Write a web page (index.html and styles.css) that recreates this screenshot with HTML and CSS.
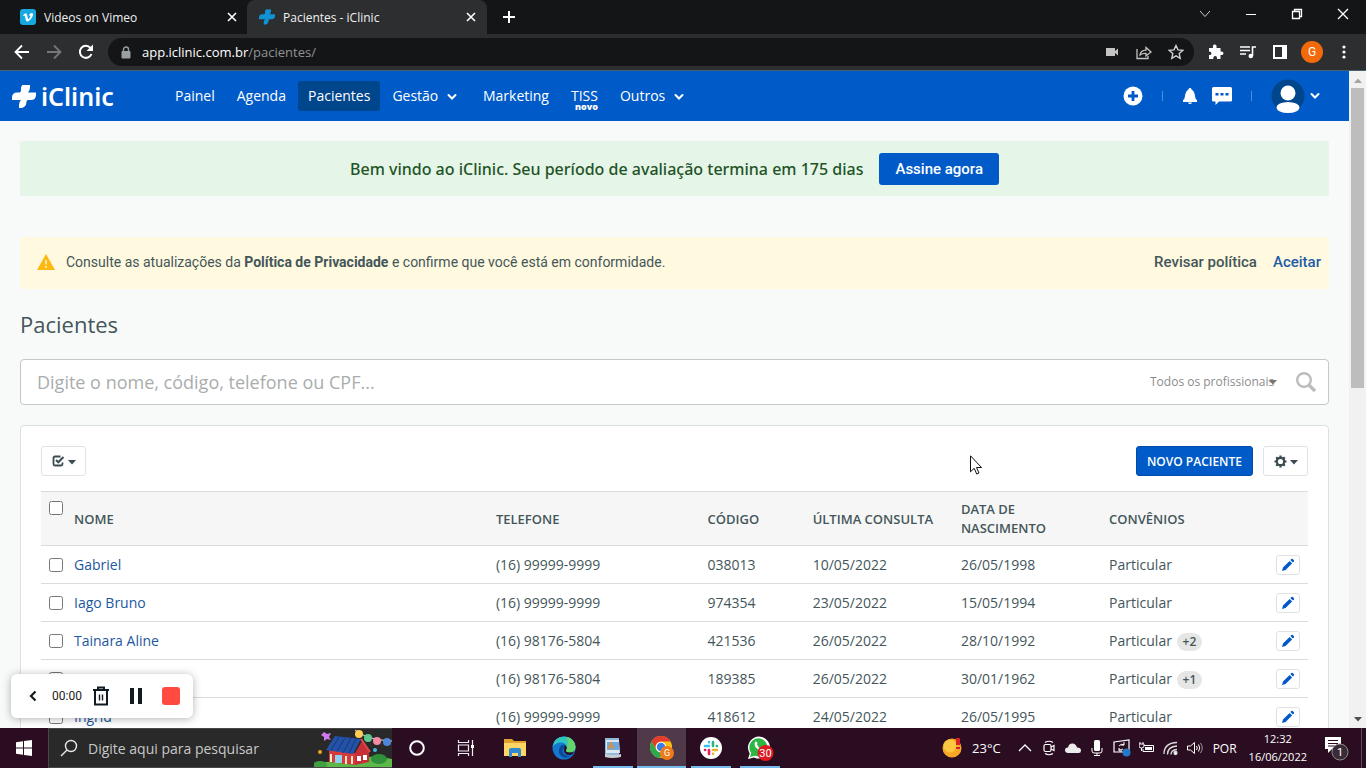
FILE: index.html
```html
<!DOCTYPE html>
<html lang="pt-BR">
<head>
<meta charset="utf-8">
<title>Pacientes - iClinic</title>
<link rel="stylesheet" href="styles.css">
</head>
<body>
<svg class="defs" aria-hidden="true">
  <symbol id="pencil" viewBox="0 0 14 14"><path fill="#0057c8" d="M1 13l1-3.400 6.600-6.700 2.500 2.500L4.500 12zM9.400 2.100l1-1q.7-.6 1.400 0l1.100 1.100q.6.700 0 1.400l-1 1z"/></symbol>
  <symbol id="close" viewBox="0 0 10 10"><path d="M1 1l8 8M9 1l-8 8" stroke="#fff" stroke-width="1.600"/></symbol>
  <symbol id="chev" viewBox="0 0 10 8"><path d="M1.500 2L5 5.500 8.500 2" fill="none" stroke="currentColor" stroke-width="2" stroke-linecap="round"/></symbol>
  <symbol id="cross" viewBox="0 0 24 23"><path d="M10.500 0H18v2q0 4-2 5.500h8v3q-.5 4.500-5 4.500h-3q-1.200.2-1.500 1.500 0 5-4.500 6.500H7v-3q.2-3.500 2-5H0v-3q.5-4.500 5-4.500h2.500Q9 7 9 5.500 8.500 1.500 10.500 0z"/></symbol>
  <symbol id="caret" viewBox="0 0 8 5"><path d="M0 0h8L4 4.500z" fill="currentColor"/></symbol>
</svg>

<div class="tabs">
  <div class="tab">
    <svg class="fav" viewBox="0 0 16 16"><rect width="16" height="16" rx="3" fill="#17a8e0"/><path d="M3 6.200l2-1.700q1.600-.8 2.100 1.400l.8 3.600q.5 1.200 1.300 0 1.500-2.300 1.100-2.800-.4-.5-1.400-.1Q9.600 3.800 11.900 4q1.700.3 1 2.700-1.300 3.300-4.500 5.600-1.700.8-2.400-.8L4.900 7.300q-.3-.9-1.200-.3z" fill="#fff"/></svg>
    <span class="tab-title">Videos on Vimeo</span>
    <button class="tab-close" aria-label="Fechar guia"><svg width="10" height="10"><use href="#close"/></svg></button>
  </div>
  <div class="tab tab-active">
    <svg class="fav" viewBox="0 0 24 23" fill="#1192d2"><use href="#cross"/></svg>
    <span class="tab-title">Pacientes - iClinic</span>
    <button class="tab-close" aria-label="Fechar guia"><svg width="10" height="10"><use href="#close"/></svg></button>
  </div>
  <button class="new-tab" aria-label="Nova guia"><svg width="12" height="12" viewBox="0 0 12 12"><path d="M6 0v12M0 6h12" stroke="#fff" stroke-width="2"/></svg></button>
  <div class="win">
    <button aria-label="Guias"><svg width="12" height="12" viewBox="0 0 12 12"><path d="M1 3l5 5.500L11 3" fill="none" stroke="#ccc"/></svg></button>
    <button aria-label="Minimizar"><svg width="12" height="12" viewBox="0 0 12 12"><path d="M1 6.500h10" stroke="#fff"/></svg></button>
    <button aria-label="Restaurar"><svg width="12" height="12" viewBox="0 0 12 12"><path d="M1.500 3.500h7v7h-7zM3.500 3.500v-2h7v7h-2" fill="none" stroke="#fff" stroke-width="1.300"/></svg></button>
    <button aria-label="Fechar"><svg width="12" height="12" viewBox="0 0 12 12"><path d="M1 1l10 10M11 1L1 11" stroke="#fff" stroke-width="1.300"/></svg></button>
  </div>
</div>

<div class="toolbar">
  <div class="history">
    <button aria-label="Voltar"><svg width="16" height="16" viewBox="0 0 16 16"><path d="M15 8H2M8 1.500L1.500 8 8 14.500" fill="none" stroke="#fff" stroke-width="1.800"/></svg></button>
    <button aria-label="Avançar"><svg width="16" height="16" viewBox="0 0 16 16"><path d="M1 8h13M8 1.500L14.500 8 8 14.500" fill="none" stroke="#777" stroke-width="1.800"/></svg></button>
    <button aria-label="Recarregar"><svg width="16" height="16" viewBox="0 0 16 16"><path d="M13.500 10A6 6 0 1 1 12.500 4" fill="none" stroke="#fff" stroke-width="2"/><path d="M15 .5V7H8.500z" fill="#fff"/></svg></button>
  </div>
  <div class="address">
    <svg width="10" height="13" viewBox="0 0 10 13"><path d="M2.500 6V3.500a2.500 2.500 0 0 1 5 0V6" fill="none" stroke="#9aa0a0" stroke-width="1.400"/><rect x=".5" y="5" width="9" height="7.500" rx="1" fill="#9aa0a0"/></svg>
    <span class="url"><b>app.iclinic.com.br</b>/pacientes/</span>
    <div class="address-icons">
      <svg width="16" height="16" viewBox="0 0 16 16"><path d="M2 4h9v3l3-2.500v7L11 9v3H2z" fill="#c4c4c4"/></svg>
      <svg width="16" height="16" viewBox="0 0 16 16" fill="none" stroke="#c4c4c4" stroke-width="1.300"><path d="M1 5v9.500h11V12M4 11q.5-4.500 6-4.800V3.500L15 8l-5 4V9.500q-3.500-.3-6 1.500z"/></svg>
      <svg width="16" height="16" viewBox="0 0 16 16"><path d="M8 1.500l2 4.400 4.700.5-3.500 3.200 1 4.700L8 11.900l-4.200 2.400 1-4.700L1.300 6.400 6 5.900z" fill="none" stroke="#d0d0d0" stroke-width="1.400"/></svg>
    </div>
  </div>
  <div class="extensions">
    <svg width="16" height="16" viewBox="0 0 16 16"><path d="M1 4h4q-.7-3.500 1.700-3.500T8.500 4h4v3.500Q15.500 7 15.500 9.200T12.500 11v4H9q.3-3-1.800-3T5.300 15H1v-4q2.500.2 2.500-1.600T1 7.500z" fill="#fff"/></svg>
    <svg width="16" height="16" viewBox="0 0 16 16"><path d="M0 3h10M0 6.500h10M0 10h6M12.500 12V3H16" stroke="#fff" stroke-width="1.600" fill="none"/><circle cx="10.800" cy="12" r="2.300" fill="#fff"/></svg>
    <svg width="16" height="16" viewBox="0 0 16 16"><path d="M2 2h12v12H2z" stroke="#fff" stroke-width="2" fill="none"/><path d="M10 2h4v12h-4z" fill="#fff"/></svg>
    <span class="profile">G</span>
    <svg width="16" height="16" viewBox="0 0 16 16" fill="#fff"><circle cx="8" cy="3" r="1.600"/><circle cx="8" cy="8" r="1.600"/><circle cx="8" cy="13" r="1.600"/></svg>
  </div>
</div>

<div class="viewport">
  <div class="page">
    <header class="nav">
      <a class="logo" href="#"><svg width="24" height="23" fill="#fff"><use href="#cross"/></svg><span>iClinic</span></a>
      <nav class="menu">
        <a href="#">Painel</a>
        <a href="#">Agenda</a>
        <a href="#" class="current">Pacientes</a>
        <a href="#" class="drop">Gestão <svg width="10" height="8"><use href="#chev"/></svg></a>
        <a href="#">Marketing</a>
        <a href="#" class="tiss">TISS<small>novo</small></a>
        <a href="#" class="drop">Outros <svg width="10" height="8"><use href="#chev"/></svg></a>
      </nav>
      <div class="nav-actions">
        <button aria-label="Adicionar"><svg width="20" height="20" viewBox="0 0 20 20"><circle cx="10" cy="10" r="9.500" fill="#fff"/><path d="M10 5v10M5 10h10" stroke="#0057c8" stroke-width="2.800"/></svg></button>
        <i class="sep"></i>
        <button aria-label="Notificações"><svg width="16" height="18" viewBox="0 0 16 18"><path d="M8 1q1.300 0 1.500 1.400Q12.500 4 13 9q.3 3.500 2 4v2H1v-2q1.700-.5 2-4 .5-5 3.500-6.600Q6.700 1 8 1zM6 15.500h4Q9.500 17 8 17t-2-1.500z" fill="#fff"/></svg></button>
        <button aria-label="Mensagens"><svg width="20" height="18" viewBox="0 0 20 18"><path d="M1.500 0h17Q20 0 20 1.500v12q0 1-1.500 1H7L3.500 18v-3.500h-2Q0 14.500 0 13.500v-12Q0 0 1.500 0z" fill="#fff"/><path d="M3.500 6h3v2.500h-3zM8.500 6h3v2.500h-3zM13.500 6h3v2.500h-3z" fill="#0057c8"/></svg></button>
        <i class="sep"></i>
        <button class="user" aria-label="Conta"><svg width="34" height="34" viewBox="0 0 34 34"><circle cx="17" cy="17" r="16.500" fill="#00468c"/><circle cx="17" cy="14" r="7.500" fill="#fff"/><ellipse cx="17" cy="28.500" rx="11.500" ry="5.500" fill="#fff"/></svg><svg width="10" height="8"><use href="#chev"/></svg></button>
      </div>
    </header>

    <main class="content">
      <section class="trial">
        <p>Bem vindo ao iClinic. Seu período de avaliação termina em 175 dias</p>
        <button>Assine agora</button>
      </section>
      <section class="policy">
        <svg width="18" height="16" viewBox="0 0 18 16"><path d="M9 0l9 16H0z" fill="#fdb913"/><path d="M9 6v4.500M9 12v1.700" stroke="#fff3c4" stroke-width="1.600"/></svg>
        <p>Consulte as atualizações da <b>Política de Privacidade</b> e confirme que você está em conformidade.</p>
        <a href="#">Revisar política</a>
        <a href="#" class="accept">Aceitar</a>
      </section>
      <h1>Pacientes</h1>
      <form class="search">
        <input type="text" aria-label="Buscar paciente" placeholder="Digite o nome, código, telefone ou CPF...">
        <div class="prof">
          <select aria-label="Profissional"><option>Todos os profissionais</option></select>
          <svg class="prof-caret" width="8" height="5"><use href="#caret"/></svg>
        </div>
        <button type="button" aria-label="Buscar"><svg width="22" height="22" viewBox="0 0 22 22" fill="none" stroke="#bdbdbd"><circle cx="9" cy="9" r="6.800" stroke-width="2.400"/><path d="M14 14l6 6" stroke-width="3.400"/></svg></button>
      </form>

      <section class="card">
        <div class="actions">
          <button class="tool" aria-label="Seleção"><svg width="13" height="12" viewBox="0 0 13 12"><path d="M8.500 1.500H3q-1.500 0-1.500 1.500v6q0 1.500 1.500 1.500h6q1.500 0 1.500-1.500V7.500" fill="none" stroke="#3b4b50" stroke-width="1.800"/><path d="M4 5l2.300 2.300L11.500 2" fill="none" stroke="#3b4b50" stroke-width="2"/></svg><svg class="tool-caret" width="8" height="5"><use href="#caret"/></svg></button>
          <button class="new">NOVO PACIENTE</button>
          <button class="tool" aria-label="Configurações"><svg width="13" height="13" viewBox="-7 -7 14 14"><circle r="4" fill="none" stroke="#3b4b50" stroke-width="2.400"/><path d="M0-6.500v2M0 6.500v-2M-6.500 0h2M6.500 0h-2M-4.600-4.600l1.400 1.400M4.600 4.600L3.200 3.200M4.600-4.600L3.200-3.200M-4.600 4.600l1.400-1.400" stroke="#3b4b50" stroke-width="2.400"/></svg><svg class="tool-caret" width="8" height="5"><use href="#caret"/></svg></button>
        </div>
        <table>
          <colgroup><col class="c-check"><col class="c-name"><col class="c-phone"><col class="c-code"><col class="c-date"><col class="c-date"><col><col class="c-edit"></colgroup>
          <thead>
            <tr><th class="pick"><input type="checkbox" aria-label="Selecionar todos"></th><th>NOME</th><th>TELEFONE</th><th>CÓDIGO</th><th>ÚLTIMA CONSULTA</th><th>DATA DE NASCIMENTO</th><th>CONVÊNIOS</th><th></th></tr>
          </thead>
          <tbody>
            <tr><td><input type="checkbox" aria-label="Gabriel"></td><td><a href="#">Gabriel</a></td><td>(16) 99999-9999</td><td>038013</td><td>10/05/2022</td><td>26/05/1998</td><td>Particular</td><td><button class="edit" aria-label="Editar"><svg width="14" height="14"><use href="#pencil"/></svg></button></td></tr>
            <tr><td><input type="checkbox" aria-label="Iago Bruno"></td><td><a href="#">Iago Bruno</a></td><td>(16) 99999-9999</td><td>974354</td><td>23/05/2022</td><td>15/05/1994</td><td>Particular</td><td><button class="edit" aria-label="Editar"><svg width="14" height="14"><use href="#pencil"/></svg></button></td></tr>
            <tr><td><input type="checkbox" aria-label="Tainara Aline"></td><td><a href="#">Tainara Aline</a></td><td>(16) 98176-5804</td><td>421536</td><td>26/05/2022</td><td>28/10/1992</td><td>Particular <span class="more">+2</span></td><td><button class="edit" aria-label="Editar"><svg width="14" height="14"><use href="#pencil"/></svg></button></td></tr>
            <tr><td><input type="checkbox" aria-label="Paciente"></td><td></td><td>(16) 98176-5804</td><td>189385</td><td>26/05/2022</td><td>30/01/1962</td><td>Particular <span class="more">+1</span></td><td><button class="edit" aria-label="Editar"><svg width="14" height="14"><use href="#pencil"/></svg></button></td></tr>
            <tr><td><input type="checkbox" aria-label="Ingrid"></td><td><a href="#">Ingrid</a></td><td>(16) 99999-9999</td><td>418612</td><td>24/05/2022</td><td>26/05/1995</td><td>Particular</td><td><button class="edit" aria-label="Editar"><svg width="14" height="14"><use href="#pencil"/></svg></button></td></tr>
          </tbody>
        </table>
      </section>
    </main>
  </div>
  <div class="scroll">
    <svg width="8" height="5" viewBox="0 0 8 5"><path d="M0 5h8L4 .5z" fill="#a3a3a3"/></svg>
    <div class="track"><div class="thumb"></div></div>
    <svg width="8" height="5" viewBox="0 0 8 5"><path d="M0 0h8L4 4.500z" fill="#505050"/></svg>
  </div>

  <div class="recorder">
    <button aria-label="Recolher"><svg width="8" height="12" viewBox="0 0 8 12"><path d="M6.500 1.500L2 6l4.500 4.500" fill="none" stroke="#111c22" stroke-width="2.200"/></svg></button>
    <span class="time">00:00</span>
    <button aria-label="Descartar"><svg width="18" height="20" viewBox="0 0 18 20" fill="none" stroke="#111c22"><path d="M1 4h16M6 4V1.500h6V4M3 4v14.500h12V4" stroke-width="2"/><path d="M7.500 8.500v6M10.500 8.500v6" stroke-width="1.400"/></svg></button>
    <button aria-label="Pausar"><svg width="12" height="16" viewBox="0 0 12 16"><path d="M0 0h4v16H0zM8 0h4v16H8z" fill="#111c22"/></svg></button>
    <button class="stop" aria-label="Parar"></button>
  </div>
  <svg class="cursor" width="12" height="20" viewBox="0 0 12 20"><path d="M.5.800v16l3.700-3.500 2.500 5.700 2.300-1-2.500-5.500h5z" fill="#fff" stroke="#111"/></svg>
</div>

<footer class="taskbar">
  <button class="start" aria-label="Iniciar"><svg width="16" height="16" viewBox="0 0 16 16"><path d="M0 2.300L7 1.300v6.300H0zM8 1.100L16 0v7.600H8zM0 8.500h7v6.300l-7-1zM8 8.500h8V16l-8-1.100z" fill="#fff"/></svg></button>
  <label class="tb-search">
    <svg width="18" height="18" viewBox="0 0 18 18" fill="none" stroke="#e8e8e8" stroke-width="1.400"><circle cx="11" cy="7" r="5.500"/><path d="M7 11l-6 6"/></svg>
    <input type="text" placeholder="Digite aqui para pesquisar">
    <svg class="party" width="78" height="38" viewBox="0 0 78 38">
      <path d="M0 38q8-6 18-5 12-5 26-3 15-5 34 0v8z" fill="#5cb947"/>
      <ellipse cx="65" cy="30" rx="8" ry="5" fill="#2f8f3b"/><ellipse cx="6" cy="36" rx="7" ry="4" fill="#3fa03f"/>
      <path d="M15 21l26 3v12l-26-3z" fill="#d63a3a"/><path d="M41 24l7-12 7 10v11l-14 3z" fill="#c62f35"/>
      <path d="M21 7l26 3-8 15-27-4z" fill="#2452a8"/><path d="M25 8l-8 13M31 9l-8 13M37 9l-8 15M42 10l-7 14" stroke="#163878"/>
      <path d="M47 10l9 13" stroke="#e04848" stroke-width="2"/>
      <path d="M21 26h7v8h-7z" fill="#8ed1ef"/><path d="M17 25v8M32 27v8M38 27v8" stroke="#f7e8c8" stroke-width="2"/>
      <path d="M43 27h4v5h-4zM49 26h4v5h-4z" fill="#fff"/>
      <path d="M41 1q12 10 37 11" stroke="#ddd" fill="none"/>
      <circle cx="45" cy="5" r="4" fill="#ffcf55"/><circle cx="54" cy="9" r="4" fill="#5bc98d"/><circle cx="63" cy="12" r="4" fill="#f38ba3"/><circle cx="73" cy="13" r="4" fill="#4f87d8"/>
      <path d="M10 3l3 2 4-1-2 4 2 3-4-1-3 2v-4l-3-2z" fill="#ce79ec"/><circle cx="6" cy="23" r="2" fill="#f5a623"/><circle cx="61" cy="21" r="2" fill="#45b8e8"/>
    </svg>
  </label>
  <div class="apps">
    <button aria-label="Cortana"><svg width="16" height="16" viewBox="0 0 16 16"><circle cx="8" cy="8" r="6.800" fill="none" stroke="#fff" stroke-width="2"/></svg></button>
    <button aria-label="Visão de tarefas"><svg width="18" height="16" viewBox="0 0 18 16" fill="none" stroke="#eee" stroke-width="1.200"><path d="M1.500 0v2.500h10V0M1.500 16v-2.500h10V16M1.500 5h10v6h-10zM15.500 0v16"/><path d="M14 5h3v3h-3z" fill="#fff" stroke="none"/></svg></button>
    <button aria-label="Explorador"><svg width="22" height="20" viewBox="0 0 22 20"><path d="M0 1h8l2 2h12v5H0z" fill="#e0a22c"/><path d="M0 5h22v13H0z" fill="#ffd565"/><path d="M5 12q0-2 2-2h8q2 0 2 2v7h-3v-4H8v4H5z" fill="#2e8bd0"/></svg></button>
    <button aria-label="Edge"><svg width="24" height="24" viewBox="0 0 24 24"><circle cx="12" cy="12" r="11.500" fill="#1478d0"/><path d="M.5 11Q2 .5 12 .5 23 1 23.500 11q0 5.500-6 5.500-4 0-3.500-2.500 2-2 .5-4.500Q12 6 7.500 6.500 2.500 7.500.5 11z" fill="#2fc4c0"/><path d="M14 .700q9 2 9.500 10.300 0 5.500-6 5.500-4 0-3.500-2.500 2-2 .5-4.500 3-3-.5-8.800z" fill="#63d36a"/><path d="M13.500 9Q10 8 8 11q-3 5 1 9 5 4 12-1.500-5 3-9-.5-3-3 0-6 1.500-1.500 1.500-3z" fill="#0b4a9a"/><path d="M13.500 9.500q2 2 .5 4.500-.5 2.500 3.500 2.500 3 0 4.500-1.300-1 3-3.500 3.800-4 .5-6-2.500-1.500-4 1-7z" fill="#2b0d22"/></svg></button>
    <button class="open" aria-label="Bloco"><svg width="18" height="22" viewBox="0 0 18 22"><path d="M1 1h14v17H1z" fill="#8fb9d8"/><path d="M2 3h13l1 13H2z" fill="#dce8f2"/><path d="M3 5h12v8H3z" fill="#6ca9dc"/><path d="M4 12l3-6 3 6M5 10h4" stroke="#e58a36" stroke-width="1.500" fill="none"/><path d="M1 17q9 2 16 0v3q-9 2-16 0z" fill="#c8cdd2"/></svg></button>
    <button class="open focused" aria-label="Chrome"><svg width="24" height="24" viewBox="0 0 24 24"><circle cx="11" cy="11" r="11" fill="#fbc116"/><path d="M11 0A11 11 0 0 1 20.500 5.500H11A5.500 5.500 0 0 0 6.200 13.700L1.500 5.500A11 11 0 0 1 11 0z" fill="#e33b2e"/><path d="M1.500 5.500l4.700 8.200Q8 17 12.500 16.300L10 22A11 11 0 0 1 1.500 5.500z" fill="#2da94f"/><circle cx="11" cy="11" r="5.200" fill="#fff"/><circle cx="11" cy="11" r="4.200" fill="#3b7de8"/><circle cx="17" cy="17" r="7" fill="#ef7a1a"/><text x="17" y="20" text-anchor="middle" fill="#fff" font-size="9">G</text></svg></button>
    <button class="open" aria-label="Slack"><svg width="22" height="22" viewBox="0 0 22 22"><circle cx="11" cy="11" r="11" fill="#fff"/><g fill="none" stroke-width="2.600" stroke-linecap="round"><path d="M9 5v.2M5 9h4" stroke="#36c5f0"/><path d="M13 5v4M17 9h-.2" stroke="#2eb67d"/><path d="M13 13h4M13 17v-.2" stroke="#ecb22e"/><path d="M9 13v4M5 13h.2" stroke="#e01e5a"/></g></svg></button>
    <button class="open" aria-label="WhatsApp"><svg width="28" height="26" viewBox="0 0 28 26"><path d="M2 24l1.700-5.500A11 11 0 1 1 8 22.400z" fill="#fff"/><path d="M4 22l1.200-4.200A9 9 0 1 1 9 20.700z" fill="#2bb741"/><path d="M9 7q1.500-1.500 2.500 1l-.5 1.500q1 3 4 4l1.500-1q3 1 1 2.500-2 1.500-6-1T9 7z" fill="#fff"/><circle cx="19.500" cy="18" r="8" fill="#de1b22"/><text x="19.500" y="22" text-anchor="middle" fill="#fff" font-size="11">30</text></svg></button>
  </div>
  <div class="tray">
    <svg class="sun" width="20" height="20" viewBox="0 0 20 20"><circle cx="10" cy="10" r="9.500" fill="#f9a825"/><circle cx="8" cy="8" r="6.500" fill="#fdc742"/><path d="M14 0h4v7h-4zM14 9h4v2h-4z" fill="#d8202a"/></svg>
    <span class="temp">23°C</span>
    <div class="tray-icons">
    <svg width="16" height="16" viewBox="0 0 16 16"><path d="M2 11l6-6 6 6" fill="none" stroke="#fff" stroke-width="1.300"/></svg>
    <svg width="16" height="16" viewBox="0 0 16 16" fill="none" stroke="#fff" stroke-width="1.200"><rect x="3" y="4.500" width="7" height="7" rx="1.500"/><path d="M10 7l3-1.500v5L10 9M4 2.500q4-2.500 8 0M4 13.500q4 2.500 8 0"/></svg>
    <svg width="16" height="16" viewBox="0 0 16 16"><path d="M3 13q-3-.4-3-3t3-2.500Q4 3 8 3.500q3 .5 4 4 4 0 4 3T13 13z" fill="#ececec"/></svg>
    <svg width="16" height="16" viewBox="0 0 16 16"><rect x="5" y="0" width="6" height="11" rx="1.500" fill="#fff"/><path d="M3 8v3q0 2 2 2h6q2 0 2-2V8M8 13v3M5 15.500h6" stroke="#fff" fill="none"/></svg>
    <svg width="18" height="18" viewBox="0 0 18 18"><path d="M1 3l15-2v12H1z" fill="none" stroke="#fff" stroke-width="1.200"/><path d="M6 7q2-3 5-1M11 3v3H8M6 9v3h3M6 10q2 2 4 0" stroke="#fff" fill="none"/><circle cx="13.500" cy="13.500" r="4" fill="#2478c8"/></svg>
    <svg width="16" height="16" viewBox="0 0 16 16" fill="none" stroke="#fff"><path d="M5 5.500h9.500v6H4V9M1 2v2M4 2v2M0 4h5v2q0 2-2.500 2T0 6zM2.500 8v3"/><path d="M6 7h7v3H6z" fill="#fff" stroke="none"/></svg>
    <svg width="16" height="16" viewBox="0 0 16 16" fill="none" stroke="#ddd" stroke-width="1.300"><path d="M1 14Q1 3 14 2.500M4.500 14.500Q4.500 6.500 14 6M8 14.500Q8 10 14 9.500"/><circle cx="12.500" cy="13" r="1.500" fill="#fff"/></svg>
    <svg width="16" height="16" viewBox="0 0 16 16" fill="none" stroke="#fff"><path d="M.5 6h3l4-3.500v11L3.500 10h-3zM9.500 6q1.500 2 0 4M11.500 4.500q2.500 3.500 0 7"/><path d="M13.500 3q3.500 5 0 10" stroke="#999"/></svg>
    </div>
    <span class="lang">POR</span>
    <div class="clock"><span>12:32</span><span>16/06/2022</span></div>
    <svg class="note" width="28" height="26" viewBox="0 0 28 26"><path d="M1 2h16v12H8l-4 4v-4H1z" fill="#fff"/><path d="M4 5.500h10M4 8.500h10M4 11h7" stroke="#2b0d22"/><circle cx="16" cy="17" r="8" fill="#3a2c36" stroke="#888"/><text x="16" y="21" text-anchor="middle" fill="#fff" font-size="11">1</text></svg>
    <i class="peek"></i>
  </div>
</footer>
</body>
</html>
```
FILE: styles.css
```css
* { box-sizing: border-box; }

body {
  margin: 0;
  height: 100vh;
  display: flex;
  flex-direction: column;
  overflow: hidden;
  font-family: "Open Sans", "Noto Sans", sans-serif;
  font-size: 14px;
  color: #44565a;
}

button {
  border: 0;
  padding: 0;
  background: none;
  font: inherit;
  color: inherit;
  display: flex;
  align-items: center;
  justify-content: center;
}

a { color: inherit; text-decoration: none; }
p, h1 { margin: 0; }
svg { flex: none; }
.defs { position: absolute; width: 0; height: 0; }

/* Browser window */
.tabs {
  flex: none;
  height: 34px;
  display: flex;
  align-items: stretch;
  background: #141517;
  color: #f0f0f0;
  font-size: 12px;
}
.tab {
  width: 240px;
  display: flex;
  align-items: center;
  padding: 0 11px 0 12px;
}
.tab:first-child { width: 247px; padding: 0 10px 0 20px; }
.tab-active { background: #2d2e30; border-radius: 8px 8px 0 0; }
.fav { width: 16px; height: 16px; margin-right: 8px; }
.tab-title { flex: 1; }
.tab-close { width: 10px; }
.new-tab { width: 44px; }
.win { margin-left: auto; display: flex; }
.win button { width: 46px; padding-bottom: 6px; }

.toolbar {
  flex: none;
  height: 37px;
  display: flex;
  align-items: center;
  padding: 0 14px;
  background: #2d2e30;
  border-bottom: 1px solid #47606f;
}
.history { display: flex; gap: 16px; margin-right: 14px; }
.address {
  flex: 1;
  height: 28px;
  display: flex;
  align-items: center;
  padding: 0 10px 0 13px;
  border-radius: 14px;
  background: #141517;
}
.url { flex: 1; padding-left: 11px; color: #909294; font-size: 13px; }
.url b { font-weight: 400; color: #fff; }
.address-icons { display: flex; gap: 16px; }
.extensions { display: flex; align-items: center; gap: 16px; padding-left: 14px; }
.profile {
  width: 22px;
  height: 22px;
  margin: 0 -3px;
  border-radius: 50%;
  background: #f26a0a;
  color: #fff;
  font: 12px/22px Roboto, sans-serif;
  text-align: center;
}

/* Application */
.viewport { flex: 1; min-height: 0; display: flex; position: relative; }
.page { flex: 1; min-width: 0; overflow: hidden; background: #f8faf9; }

.nav {
  height: 50px;
  display: flex;
  align-items: center;
  padding: 0 29px 0 12px;
  background: #005bc8;
  color: #fff;
}
.logo {
  display: flex;
  align-items: center;
  gap: 5px;
  width: 153px;
  font: 600 25px/30px "Noto Sans", sans-serif;
}
.menu { display: flex; gap: 2px; }
.menu a {
  position: relative;
  height: 30px;
  padding: 0 10px;
  line-height: 30px;
  white-space: nowrap;
}
.menu .current { background: #00468c; border-radius: 2px; }
.menu .drop { padding-right: 14px; }
.drop svg { margin-left: 5px; }
.menu small {
  position: absolute;
  right: 10px;
  top: 20px;
  font-size: 9px;
  line-height: 12px;
  font-weight: 800;
}
.nav-actions { display: flex; align-items: center; gap: 14px; margin-left: auto; }
.sep { width: 1px; height: 10px; margin: 0 5px; background: #4b8fdd; }
.user { gap: 5px; }

.content { padding: 20px 20px 0; }
.trial {
  min-height: 55px;
  display: flex;
  align-items: center;
  justify-content: center;
  gap: 16px;
  border-radius: 3px;
  background: #e5f5e7;
  color: #1f5428;
  font: 500 16px/24px "Noto Sans", sans-serif;
}
.trial button {
  height: 32px;
  padding: 0 16px;
  border-radius: 3px;
  background: #005bc8;
  color: #fff;
  font: 500 15px Roboto, sans-serif;
}
.policy {
  min-height: 52px;
  margin-top: 41px;
  display: flex;
  align-items: center;
  padding: 0 8px 2px 17px;
  border-radius: 3px;
  background: #fff9df;
  font: 14px Roboto, sans-serif;
}
.policy p { flex: 1; padding-left: 11px; }
.policy a { margin-left: 16px; font-weight: 500; font-size: 15px; }
.policy .accept { color: #1f5ca8; }

h1 { margin: 20px 0; font-size: 22px; line-height: 30px; font-weight: 400; }

.search {
  height: 46px;
  display: flex;
  align-items: center;
  padding: 0 11px 0 16px;
  border: 1px solid #c3c8c9;
  border-radius: 4px;
  background: #fff;
}
.search input {
  flex: 1;
  border: 0;
  padding: 0;
  background: none;
  font: 18px "Open Sans", sans-serif;
}
.search input::placeholder { color: #a9adae; }
.prof { position: relative; width: 127px; margin-right: 18px; padding-bottom: 2px; }
.prof select {
  display: block;
  appearance: none;
  width: 100%;
  border: 0;
  padding: 0;
  background: none;
  color: #8c8c8c;
  font: 12px "Open Sans", sans-serif;
}
.prof-caret { position: absolute; right: 0; top: 7px; color: #777; }

.card {
  margin-top: 20px;
  padding: 20px;
  border: 1px solid #dbe0e1;
  border-radius: 4px;
  background: #fff;
}
.actions { display: flex; gap: 10px; margin-bottom: 15px; }
.tool {
  width: 45px;
  height: 30px;
  gap: 3px;
  border: 1px solid #dfe3e4;
  border-radius: 3px;
  background: #fff;
  color: #3b4b50;
}
.tool-caret { margin-top: 3px; }
.new {
  height: 30px;
  margin-left: auto;
  padding: 0 10px;
  border: 1px solid #004ba8;
  border-radius: 3px;
  background: #005bc8;
  color: #fff;
  font-size: 12px;
  font-weight: 600;
}

table { width: 100%; table-layout: fixed; border-collapse: collapse; }
.c-check { width: 25px; }
.c-name { width: 33.3%; }
.c-phone { width: 16.7%; }
.c-code { width: 8.3%; }
.c-date { width: 11.7%; }
.c-edit { width: 40px; }
th {
  height: 54px;
  padding: 8px 8px 7px;
  border-top: 1px solid #d9dcdd;
  background: #f6f6f6;
  text-align: left;
  font-size: 13px;
  line-height: 19px;
  font-weight: 600;
}
th.pick { vertical-align: top; }
td {
  height: 38px;
  padding: 0 8px;
  border-top: 1px solid #d9dcdd;
  line-height: 20px;
}
td a { color: #1c57a0; }
td input, th input { display: block; width: 14px; height: 14px; margin: 0; }
th input { margin-top: 1px; }
.edit {
  width: 24px;
  height: 20px;
  border: 1px solid #dde2e4;
  border-radius: 3px;
  background: #fff;
}
.more {
  display: inline-block;
  margin-left: 1px;
  padding: 0 6px;
  border-radius: 9px;
  background: #e6e6e6;
  font-size: 12px;
  font-weight: 600;
  line-height: 18px;
}

.scroll {
  width: 17px;
  display: flex;
  flex-direction: column;
  align-items: center;
  padding: 7px 0 6px;
  gap: 5px;
  background: #f1f1f1;
}
.track { flex: 1; align-self: stretch; padding: 0 2px; }
.thumb { height: 48%; background: #bdbdbd; }

.recorder {
  position: absolute;
  left: 11px;
  bottom: 10px;
  width: 182px;
  height: 44px;
  display: flex;
  align-items: center;
  gap: 20px;
  padding: 0 13px 0 18px;
  border-radius: 6px;
  background: #fff;
  box-shadow: 0 1px 8px rgba(0, 0, 0, .3);
}
.time { margin: 0 -10px 0 -5px; font: 12px Roboto, sans-serif; color: #222; }
.stop { width: 18px; height: 18px; border-radius: 3px; background: #ff4a42; }
.cursor { position: absolute; left: 970px; top: 384px; }

/* Taskbar */
.taskbar {
  flex: none;
  height: 40px;
  display: flex;
  background: #2b0d22;
  color: #fff;
}
.start { width: 48px; }
.tb-search {
  width: 344px;
  display: flex;
  align-items: center;
  padding-left: 11px;
  border: 1px solid #4a4547;
  border-right: 0;
  background: #292929;
}
.tb-search input {
  flex: 1;
  min-width: 0;
  margin-left: 10px;
  padding: 0;
  border: 0;
  background: none;
  font: 14px "Open Sans", sans-serif;
}
.tb-search input::placeholder { color: #c8c8c8; }
.apps { display: flex; }
.apps button { width: 49px; }
.apps .open {
  background: linear-gradient(#76b9ed, #76b9ed) bottom / 40px 2px no-repeat;
}
.apps .focused {
  background-color: #503a49;
  background-size: 100% 2px;
}
.apps text, .note text { font-family: Roboto, sans-serif; }
.tray { margin-left: auto; display: flex; align-items: center; }
.temp { margin: 0 16px 0 10px; font-size: 13px; }
.tray-icons { display: flex; align-items: center; gap: 8px; }
.lang { margin: 0 12px 0 10px; font-size: 12px; }
.clock {
  display: flex;
  flex-direction: column;
  align-items: center;
  font-size: 11px;
  line-height: 18px;
}
.note { margin: 0 9px 0 17px; }
.peek { width: 1px; align-self: stretch; margin-right: 4px; background: #5d4a57; }
```
